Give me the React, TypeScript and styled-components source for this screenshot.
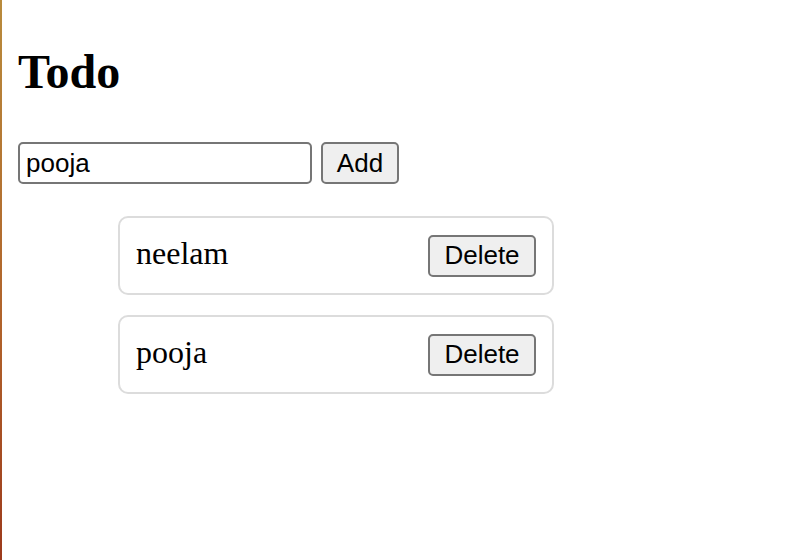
import styled, { createGlobalStyle } from "styled-components";

const GlobalStyle = createGlobalStyle`
  html, body {
    margin: 0;
    padding: 0;
    background: #ffffff;
  }
  body {
    font-family: "Liberation Serif", "Times New Roman", serif;
    color: #000000;
  }
`;

const Page = styled.div`
  display: flex;
  min-height: 100vh;
`;

const EdgeStrip = styled.div`
  width: 2px;
  flex-shrink: 0;
  background: linear-gradient(to bottom, #b98b3c 0%, #b0612a 60%, #9c3a1c 100%);
`;

const Content = styled.main`
  flex: 1;
  padding: 0 16px;
`;

const Title = styled.h1`
  margin: 44px 0 0;
  font-size: 48px;
  line-height: 55px;
  font-weight: bold;
`;

const AddForm = styled.form`
  display: flex;
  align-items: center;
  gap: 9px;
  margin-top: 43px;
`;

const TextInput = styled.input`
  box-sizing: border-box;
  width: 294px;
  height: 42px;
  padding: 2px 6px;
  border: 2px solid #767676;
  border-radius: 5px;
  font-family: "Liberation Sans", Arial, sans-serif;
  font-size: 26px;
  color: #000;
  outline: none;
`;

const Button = styled.button<{ $width: number }>`
  box-sizing: border-box;
  width: ${(p) => p.$width}px;
  height: 42px;
  padding: 0;
  background: #efefef;
  border: 2px solid #767676;
  border-radius: 5px;
  font-family: "Liberation Sans", Arial, sans-serif;
  font-size: 26px;
  color: #000;
  cursor: pointer;
`;

const List = styled.ul`
  list-style: none;
  margin: 32px 0 0 100px;
  padding: 0;
  display: flex;
  flex-direction: column;
  gap: 20px;
`;

const TodoCard = styled.li`
  box-sizing: border-box;
  width: 436px;
  height: 79px;
  padding: 0 16px;
  border: 2px solid #dcdcdc;
  border-radius: 10px;
  display: flex;
  align-items: center;
  justify-content: space-between;
`;

const TodoText = styled.span`
  font-size: 32px;
  margin-top: -4px;
`;

const todos = ["neelam", "pooja"];

const App = (): JSX.Element => {
  return (
    <>
      <GlobalStyle />
      <Page>
        <EdgeStrip />
        <Content>
          <Title>Todo</Title>
          <AddForm onSubmit={(e) => e.preventDefault()}>
            <TextInput defaultValue="pooja" />
            <Button $width={78} type="submit">
              Add
            </Button>
          </AddForm>
          <List>
            {todos.map((todo) => (
              <TodoCard key={todo}>
                <TodoText>{todo}</TodoText>
                <Button $width={108} type="button">
                  Delete
                </Button>
              </TodoCard>
            ))}
          </List>
        </Content>
      </Page>
    </>
  );
};

export default App;
